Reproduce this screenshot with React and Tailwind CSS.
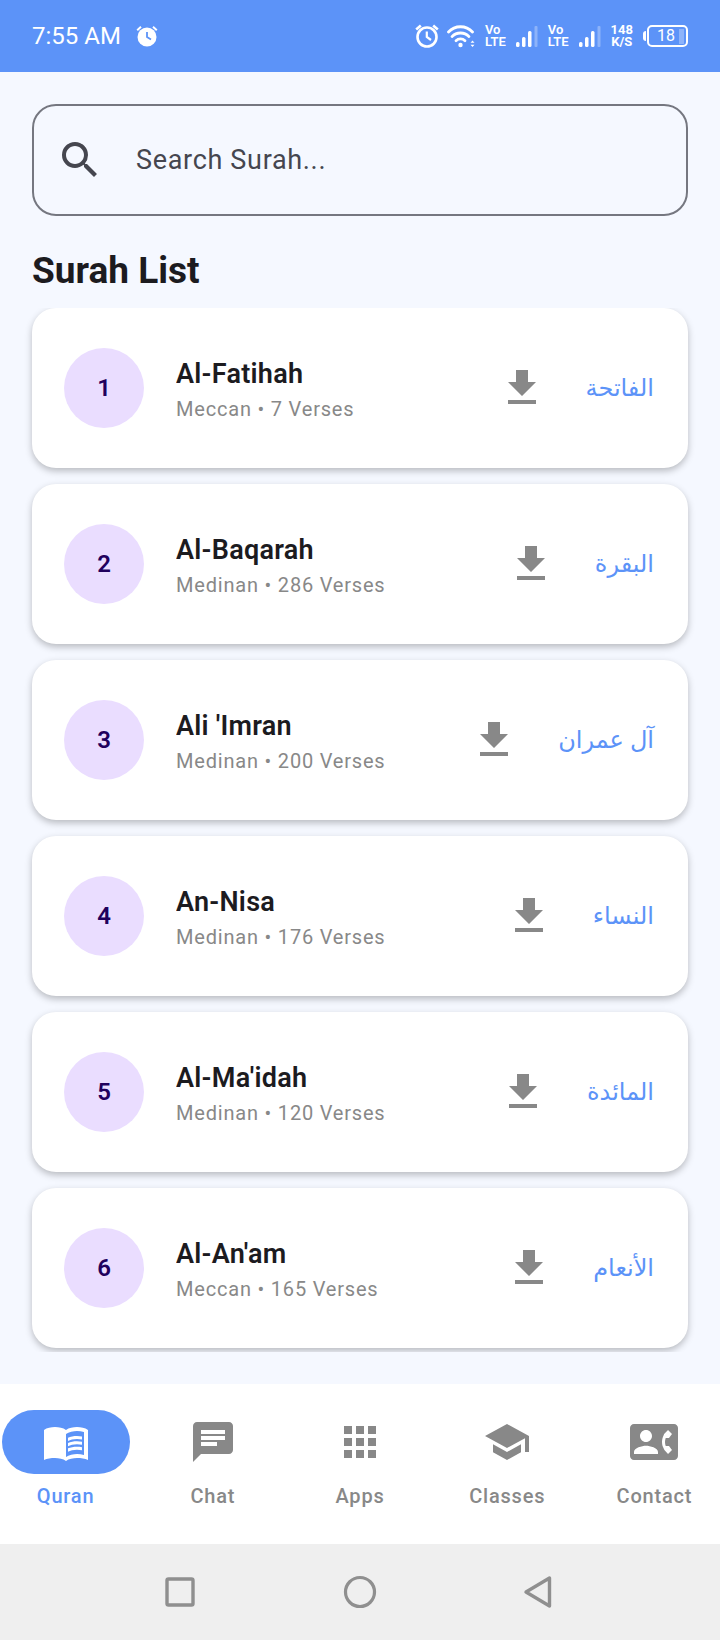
import React, { useState } from "react";
import { MdApps, MdChat, MdContactPhone, MdSchool, MdSearch } from "react-icons/md";

const SURAHS = [
  { number: 1, name: "Al-Fatihah", arabic: "الفاتحة", place: "Meccan", verses: 7 },
  { number: 2, name: "Al-Baqarah", arabic: "البقرة", place: "Medinan", verses: 286 },
  { number: 3, name: "Ali 'Imran", arabic: "آل عمران", place: "Medinan", verses: 200 },
  { number: 4, name: "An-Nisa", arabic: "النساء", place: "Medinan", verses: 176 },
  { number: 5, name: "Al-Ma'idah", arabic: "المائدة", place: "Medinan", verses: 120 },
  { number: 6, name: "Al-An'am", arabic: "الأنعام", place: "Meccan", verses: 165 },
];

function OpenBook({ className }) {
  return (
    <svg className={className} viewBox="0 0 24 24" fill="currentColor" aria-hidden="true">
      <path
        fillRule="evenodd"
        d="M23 6c-1.500-1.100-3.550-1.500-5.500-1.500S13.450 4.900 12 6c-1.450-1.100-3.550-1.500-5.500-1.500S2.450 4.900 1 6v15c1.500-.7 3.500-1 5.500-1 1.950 0 4.050.4 5.500 1.500 1.450-1.100 3.550-1.500 5.500-1.500 2 0 4 .3 5.500 1V6zm-2 12.500c-1.100-.35-2.300-.5-3.500-.5-1.700 0-4.150.65-5.500 1.500V8c1.350-.85 3.800-1.500 5.500-1.500 1.200 0 2.400.15 3.500.5v11.500z"
      />
      <path d="M17.500 10.500c.88 0 1.730.09 2.500.26V9.240C19.210 9.090 18.360 9 17.500 9c-1.700 0-3.240.29-4.500.83v1.660c1.130-.64 2.700-.99 4.500-.99z" />
      <path d="M13 12.490v1.660c1.130-.64 2.700-.99 4.500-.99.88 0 1.730.09 2.500.26V11.900c-.79-.15-1.640-.24-2.500-.24-1.700 0-3.240.3-4.500.83z" />
      <path d="M17.500 14.330c-1.700 0-3.240.29-4.500.83v1.660c1.130-.64 2.700-.99 4.500-.99.88 0 1.730.09 2.500.26v-1.520c-.79-.16-1.640-.24-2.500-.24z" />
    </svg>
  );
}

const TABS = [
  { label: "Quran", Icon: OpenBook },
  { label: "Chat", Icon: MdChat },
  { label: "Apps", Icon: MdApps },
  { label: "Classes", Icon: MdSchool },
  { label: "Contact", Icon: MdContactPhone },
];

function AlarmBadge() {
  return (
    <svg className="size-6" viewBox="0 0 24 24" fill="none" stroke="currentColor" aria-hidden="true">
      <circle cx="12" cy="13" r="9.5" fill="currentColor" stroke="none" />
      <path d="M2.2 6.2 6 2.8M21.8 6.2 18 2.8" strokeWidth="2" />
      <path d="M12 8v5l4 2.4" stroke="#5c93f8" strokeWidth="1.8" />
    </svg>
  );
}

function Alarm() {
  return (
    <svg className="size-6" viewBox="0 0 24 24" fill="none" stroke="currentColor" strokeWidth="2.6" aria-hidden="true">
      <circle cx="12" cy="13" r="9.500" />
      <path d="M1.200 5.500 5.800 1.500M22.800 5.500 18.200 1.500" />
      <path d="M11.800 7.500V13l4.200 3" strokeWidth="2.200" />
    </svg>
  );
}

function Wifi() {
  return (
    <svg className="h-6 w-7" viewBox="0 0 28 24" fill="none" stroke="currentColor" strokeWidth="2.8" aria-hidden="true">
      <path d="M1.5 8C8 1 19 1 25.500 8" strokeLinecap="round" />
      <path d="M5 12.600C9.500 7.800 17.500 7.800 22 12.600" strokeLinecap="round" />
      <path d="M9 16.800C11.500 14.300 15.500 14.300 18 16.800" strokeLinecap="round" />
      <circle cx="13.500" cy="21" r="2.200" fill="currentColor" stroke="none" />
      <path d="M23.500 18.800 25.500 16.500l2 2.300zM23.500 20.800l2 2.300 2-2.300z" fill="currentColor" stroke="none" />
    </svg>
  );
}

function Signal() {
  return (
    <svg className="h-6 w-[22px]" viewBox="0 0 22 24" fill="currentColor" aria-hidden="true">
      <rect x="0" y="18" width="3.500" height="5" rx="1.500" />
      <rect x="6" y="13" width="3.500" height="10" rx="1.500" />
      <rect x="12" y="7" width="3.500" height="16" rx="1.500" />
      <rect x="18.500" y="2" width="3" height="21" rx="1" opacity="0.300" />
    </svg>
  );
}

function VoLte() {
  return (
    <div className="flex flex-col text-[13px] leading-3 font-semibold">
      <span>Vo</span>
      <span>LTE</span>
    </div>
  );
}

function Battery() {
  return (
    <div className="flex items-center gap-px">
      <span className="h-2.5 w-[3px] rounded-l-sm bg-white" />
      <div className="flex h-[22px] w-[41px] items-center justify-end gap-1 rounded-[5px] border-2 border-white pr-0.5">
        <span className="text-base leading-4">18</span>
        <span className="h-[15px] w-[5px] bg-white/30" />
      </div>
    </div>
  );
}

function StatusBar() {
  return (
    <header className="flex h-18 items-center justify-between bg-[#5c93f8] px-8 text-white">
      <div className="flex items-center gap-3.5">
        <span className="text-2xl">7:55 AM</span>
        <AlarmBadge />
      </div>
      <div className="flex items-center gap-2.5">
        <div className="flex items-center gap-2">
          <Alarm />
          <Wifi />
        </div>
        <VoLte />
        <Signal />
        <VoLte />
        <Signal />
        <div className="flex flex-col items-center text-[13px] leading-3 font-bold">
          <span>148</span>
          <span>K/S</span>
        </div>
        <Battery />
      </div>
    </header>
  );
}

function SurahCard({ surah }) {
  return (
    <li className="flex h-40 items-center rounded-3xl bg-white px-8 shadow-[0_3px_7px_rgba(0,0,0,0.25)]">
      <span className="flex size-20 shrink-0 items-center justify-center rounded-full bg-[#eaddff] text-2xl font-semibold text-[#21005d]">
        {surah.number}
      </span>
      <div className="ml-8 min-w-0 flex-1">
        <h2 className="truncate text-[27px] leading-[42px] font-semibold tracking-[0.01em] text-[#1c1b1f]">{surah.name}</h2>
        <p className="text-xl leading-7 tracking-[0.04em] text-[#888888]">
          {surah.place} • {surah.verses} Verses
        </p>
      </div>
      <button type="button" aria-label={`Download ${surah.name}`} className="flex size-24 items-center justify-center text-[#888888]">
        <svg className="size-12" viewBox="0 0 24 24" fill="currentColor" aria-hidden="true">
          <path d="M19 9h-4V3H9v6H5l7 7 7-7zM5 18v2h14v-2H5z" />
        </svg>
      </button>
      <span lang="ar" dir="rtl" className="ml-4 pr-0.5 text-2xl font-medium text-[#5c93f8]">
        {surah.arabic}
      </span>
    </li>
  );
}

function TabBar({ active, onChange }) {
  return (
    <nav className="grid h-40 grid-cols-5 gap-4 bg-white pt-[26px]">
      {TABS.map(({ label, Icon }) => {
        const isActive = label === active;
        return (
          <button
            key={label}
            type="button"
            onClick={() => onChange(label)}
            aria-current={isActive ? "page" : undefined}
            className="flex flex-col items-center gap-1.5"
          >
            <span className={`flex h-16 w-32 items-center justify-center rounded-full ${isActive ? "bg-[#5c93f8] text-white" : "text-[#888888]"}`}>
              <Icon className="size-12" />
            </span>
            <span className={`text-xl leading-8 font-medium tracking-[0.04em] ${isActive ? "text-[#5c93f8]" : "text-[#888888]"}`}>
              {label}
            </span>
          </button>
        );
      })}
    </nav>
  );
}

function SystemBar() {
  return (
    <footer className="grid h-24 grid-cols-3 place-items-center bg-[#efefef] px-[12.5%] text-[#8f8f8f]">
      <button type="button" aria-label="Recent apps">
        <svg className="size-9" viewBox="0 0 36 36" fill="none" stroke="currentColor" strokeWidth="3.400">
          <rect x="5" y="5" width="26" height="26" rx="1.500" />
        </svg>
      </button>
      <button type="button" aria-label="Home">
        <svg className="size-9" viewBox="0 0 36 36" fill="none" stroke="currentColor" strokeWidth="3.200">
          <circle cx="18" cy="18" r="14.500" />
        </svg>
      </button>
      <button type="button" aria-label="Back">
        <svg className="size-9" viewBox="0 0 36 36" fill="none" stroke="currentColor" strokeWidth="3.400" strokeLinejoin="round">
          <path d="M27.500 4v28L4 18z" />
        </svg>
      </button>
    </footer>
  );
}

export default function App() {
  const [query, setQuery] = useState("");
  const [tab, setTab] = useState("Quran");
  const surahs = SURAHS.filter((s) => s.name.toLowerCase().includes(query.toLowerCase()));

  return (
    <div className="flex min-h-screen flex-col bg-[#f5f8ff] font-[Roboto,'DejaVu_Sans',sans-serif]">
      <StatusBar />
      <main className="flex-1 px-8 pt-8">
        <label className="flex h-28 items-center rounded-3xl border-2 border-[#757780] px-[22px] text-[#45464f]">
          <MdSearch className="size-12 shrink-0" />
          <input
            type="text"
            aria-label="Search Surah"
            placeholder="Search Surah..."
            value={query}
            onChange={(e) => setQuery(e.target.value)}
            className="ml-8 min-w-0 flex-1 bg-transparent text-[27px] tracking-wide outline-none placeholder:text-[#45464f]"
          />
        </label>
        <h1 className="mt-8 mb-3.5 text-[37px] leading-[46px] font-bold text-[#1c1b1f]">Surah List</h1>
        <ul className="-mx-8 flex flex-col gap-4 overflow-hidden px-8 pb-1">
          {surahs.map((surah) => (
            <SurahCard key={surah.number} surah={surah} />
          ))}
        </ul>
      </main>
      <TabBar active={tab} onChange={setTab} />
      <SystemBar />
    </div>
  );
}
